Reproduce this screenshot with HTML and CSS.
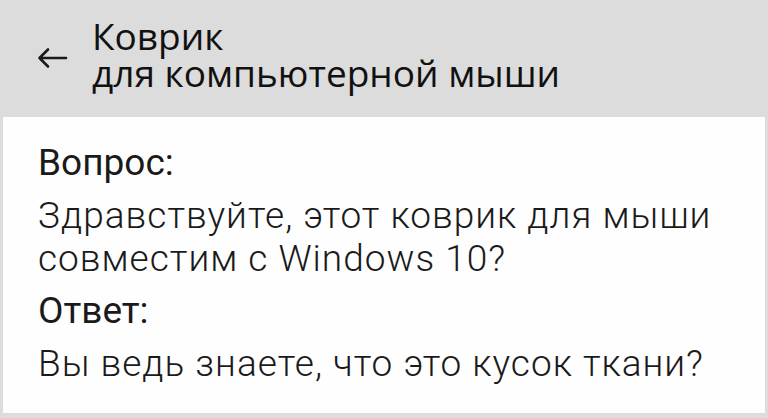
FILE: index.html
```html
<!DOCTYPE html>
<html lang="ru">
<head>
<meta charset="utf-8">
<link rel="stylesheet" href="styles.css">
</head>
<body>
<div class="screen">
  <header class="topbar">
    <svg class="back" width="32" height="24" viewBox="0 0 32 24">
      <path d="M30 12H3.5M12 3.5L3.5 12l8.5 8.5" fill="none" stroke="#1a1a1a" stroke-width="2.6" stroke-linecap="round" stroke-linejoin="round"/>
    </svg>
    <h1 class="title"><span class="line">Коврик</span><span class="line">для компьютерной мыши</span></h1>
  </header>
  <main class="card">
    <div class="label">Вопрос:</div>
    <p class="text">Здравствуйте, этот коврик для мыши совместим с Windows 10?</p>
    <div class="label">Ответ:</div>
    <p class="text answer">Вы ведь знаете, что это кусок ткани?</p>
  </main>
</div>
</body>
</html>
```
FILE: styles.css
```css
html, body {
  margin: 0;
  padding: 0;
}
body {
  background: #dcdcdc;
  width: 768px;
  height: 418px;
  overflow: hidden;
}
.screen {
  display: flex;
  flex-direction: column;
  height: 418px;
}
.topbar {
  height: 117px;
  display: flex;
  align-items: flex-start;
  padding-left: 36px;
  box-sizing: border-box;
}
.back {
  flex: none;
  margin-top: 46px;
}
.title {
  margin: 17px 0 0 24px;
  font-family: "Open Sans", "Noto Sans", sans-serif;
  font-weight: 400;
  font-size: 37px;
  line-height: 37px;
  color: #111;
  display: flex;
  flex-direction: column;
}
.line {
  display: block;
  height: 37px;
}
.card {
  background: #fefefe;
  margin: 0 3px;
  height: 296px;
  box-sizing: border-box;
  padding: 24px 35px 0;
  font-family: Roboto, "Liberation Sans", sans-serif;
  font-weight: 300;
  color: #1a1a1a;
}
.label {
  font-size: 37px;
  line-height: 43px;
  font-weight: 400;
  margin-bottom: 10px;
}
.text {
  margin: 0 0 9px;
  font-size: 37px;
  line-height: 43px;
  letter-spacing: 1px;
}
.answer {
  letter-spacing: 1px;
}
```
